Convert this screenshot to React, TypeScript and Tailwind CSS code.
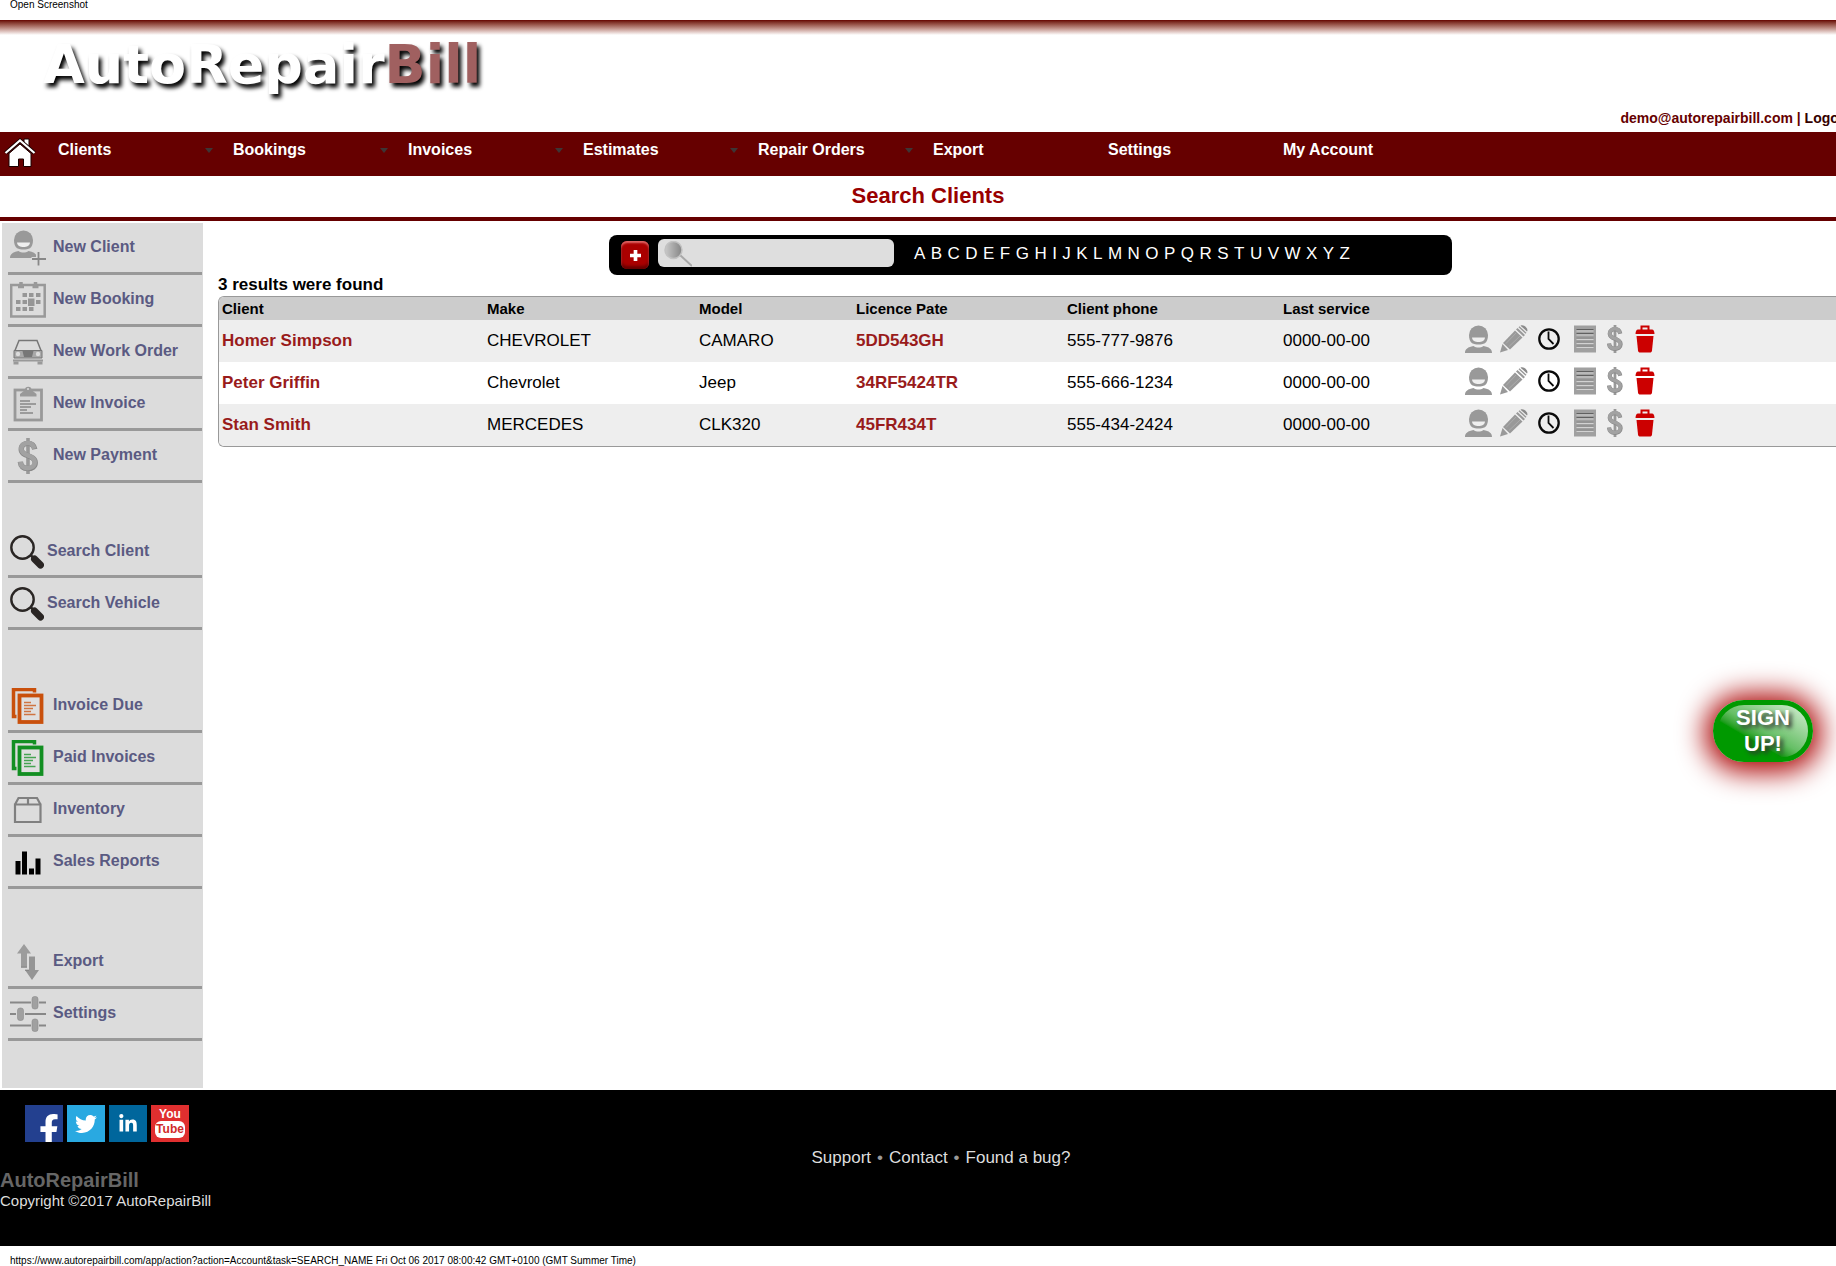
import React from "react";
import { FaFacebookF, FaLinkedinIn, FaTwitter } from "react-icons/fa";

type IconProps = { className?: string };

const GREY = "#999999";

function HomeIcon() {
  return (
    <svg viewBox="0 0 32 30" className="h-[30px] w-8" aria-hidden="true">
      <path d="M20 6V1h5v9z" fill="#fff" stroke="#1a0000" strokeWidth="1" />
      <path d="M5 15.500L16 6l11 9.500V28.500H19.500V21h-5v7.500H5z" fill="#fff" stroke="#1a0000" strokeWidth="1" />
      <path d="M1.500 15L16 2.500 30.500 15" fill="none" stroke="#1a0000" strokeWidth="4" />
      <path d="M1.500 15L16 2.500 30.500 15" fill="none" stroke="#fff" strokeWidth="2.200" />
    </svg>
  );
}

function PersonShape() {
  return (
    <g>
      <path d="M4 10a9.500 9.500 0 0 1 19 0c0 9-5 9.500-9.500 9.500S4 19 4 10z" fill={GREY} />
      <path d="M7 12.500h13c-.5 3.500-3 4.500-6.500 4.500S7.500 16 7 12.500z" fill="#efefef" />
      <path d="M0 28c0-4 3-6 8.500-7 3 2 7 2 10 0 5.500 1 8.500 3 8.500 7z" fill={GREY} />
    </g>
  );
}

function PersonIcon() {
  return (
    <svg viewBox="0 0 28 28" className="size-7" aria-hidden="true">
      <PersonShape />
    </svg>
  );
}

function PersonPlusIcon({ className }: IconProps) {
  return (
    <svg viewBox="0 0 36 36" className={className} aria-hidden="true">
      <PersonShape />
      <path d="M28 22.500v13M21.500 29h14" stroke="#dcdcdc" strokeWidth="4" />
      <path d="M28.500 22v13.500M22 29h14" stroke="#888" strokeWidth="1.800" />
    </svg>
  );
}

function CalendarIcon({ className }: IconProps) {
  return (
    <svg viewBox="0 0 36 36" className={className} aria-hidden="true">
      <rect x="1.200" y="3" width="33.500" height="31.500" fill="none" stroke="#999" strokeWidth="2.500" />
      <path d="M8 4.500h6M22.500 4.500h6" stroke="#999" strokeWidth="3.500" />
      <path d="M11 0v6M25.500 0v6" stroke="#999" strokeWidth="3.500" />
      <g fill="#969696">
        <path d="M12.500 11h4.500v4h-4.500zM19 11h4.500v4H19zM26 11h4.500v4H26z" />
        <path d="M6 18h4.500v4H6zM12.500 18h4.500v4h-4.500zM18 16.500h6.500V24H18zM26 18h4.500v4H26z" />
        <path d="M6 25h4.500v4H6zM12.500 25h4.500v4h-4.500zM19 25h4.500v4H19z" />
      </g>
    </svg>
  );
}

function CarIcon({ className }: IconProps) {
  return (
    <svg viewBox="0 0 36 36" className={className} aria-hidden="true">
      <path d="M5 16.500L9 6.500h18l4 10" fill="none" stroke="#777" strokeWidth="1.500" />
      <path d="M4 16.500h28V24H4z" fill="#a8a8a8" stroke="#777" strokeWidth="1" />
      <path d="M12.500 17h11l-1.500 6h-8z" fill="#777" />
      <circle cx="8" cy="20" r="2.200" fill="#dcdcdc" />
      <circle cx="28" cy="20" r="2.200" fill="#dcdcdc" />
      <path d="M3 26.500h30" stroke="#999" strokeWidth="2" />
      <path d="M3.500 27.500h5V30.500h-5zM27.500 27.500h5V30.500h-5z" fill="#999" />
    </svg>
  );
}

function ClipboardIcon({ className }: IconProps) {
  return (
    <svg viewBox="0 0 36 36" className={className} aria-hidden="true">
      <rect x="5" y="4" width="26.500" height="30" fill="#d6d6d6" stroke="#999" strokeWidth="2.800" />
      <path d="M10 10.500V8l5-4a3.200 3.200 0 0 1 6.500 0l5 4v2.500z" fill="#999" />
      <circle cx="18" cy="3" r="1" fill="#dcdcdc" />
      <path d="M10 15h10M10 18h16M10 21h11M10 24h7M10 27h13" stroke="#888" strokeWidth="1.500" />
    </svg>
  );
}

function DollarIcon({ className }: IconProps) {
  return (
    <svg viewBox="0 0 22 40" className={className} aria-hidden="true">
      <path d="M11 0v40" stroke="#999" strokeWidth="4" />
      <path
        d="M18.500 12.500C17.500 7.500 14.500 6 11 6c-4 0-7.500 2-7.500 6.500 0 9 15.500 5.500 15.500 15 0 4.500-4 6.500-8 6.500-4.500 0-8-2-8.500-7.500"
        fill="none"
        stroke="#888"
        strokeWidth="6"
      />
      <path
        d="M18 12C17 7.500 14.500 5.500 11 5.500c-4 0-7.500 2-7.500 6.500 0 9 15 5.500 15 15 0 4.500-4 6.500-8 6.500-4.500 0-7.500-2-8-7"
        fill="none"
        stroke="#a2a2a2"
        strokeWidth="5"
      />
    </svg>
  );
}

function MagnifierIcon({ className }: IconProps) {
  return (
    <svg viewBox="0 0 34 34" className={className} aria-hidden="true">
      <circle cx="12.500" cy="12.500" r="11.200" fill="none" stroke="#2a2624" strokeWidth="2.400" />
      <path d="M20.500 20l4 4" stroke="#2a2624" strokeWidth="2.500" />
      <path d="M24.500 24l6 6" stroke="#2a2624" strokeWidth="7" strokeLinecap="round" />
    </svg>
  );
}

function Documents({ className, color }: { className?: string; color: string }) {
  return (
    <svg viewBox="0 0 36 36" className={className} aria-hidden="true">
      <path d="M7.500 28.500H4.500V1.500H25.500V4.500" transform="translate(-1 0)" fill="none" stroke={color} strokeWidth="3.500" />
      <rect x="10.500" y="7.500" width="22" height="26.500" transform="translate(-1 0)" fill="#e0e0e0" stroke={color} strokeWidth="3.800" />
      <path d="M14 14.500h7M14 17.500h12M14 20.500h9M14 23.500h7M14 26.500h11.500" stroke={color} strokeOpacity="0.750" strokeWidth="1.400" />
    </svg>
  );
}

function OrangeDocsIcon({ className }: IconProps) {
  return <Documents className={className} color="#c9500c" />;
}

function GreenDocsIcon({ className }: IconProps) {
  return <Documents className={className} color="#128f22" />;
}

function BoxIcon({ className }: IconProps) {
  return (
    <svg viewBox="0 0 36 36" className={className} aria-hidden="true">
      <path d="M5 12.500h25.500V30H5zM5 12.500L8.500 6h18.500l3.500 6.500M18 6v6.500" fill="none" stroke="#808080" strokeWidth="2.200" />
    </svg>
  );
}

function BarsIcon({ className }: IconProps) {
  return (
    <svg viewBox="0 0 36 36" className={className} aria-hidden="true">
      <path d="M5.500 17h5V30.500h-5zM12 7.500h5v23h-5zM19 24.500h5v6h-5zM25.500 14.500h5v16h-5z" fill="#000" />
    </svg>
  );
}

function UpDownIcon({ className }: IconProps) {
  return (
    <svg viewBox="0 0 36 36" className={className} aria-hidden="true">
      <path d="M14 0l7 9.500h-4V23h-6V9.500H7z" fill="#9c9c9c" />
      <path d="M19 12.500h6V26h4l-7 10-7-10h4z" fill="#959595" />
      <path d="M11 23.200h6M15 26.200h4" stroke="#7f7f7f" />
    </svg>
  );
}

function SlidersIcon({ className }: IconProps) {
  return (
    <svg viewBox="0 0 36 36" className={className} aria-hidden="true">
      <path d="M0 6.500h21M29 6.500h7M0 18h6M15 18h21M0 29.500h21M29 29.500h7" stroke="#888" strokeWidth="1.800" />
      <g fill="#a0a0a0" stroke="#8c8c8c" strokeWidth="0.600">
        <rect x="22" y="0.500" width="6" height="12.500" rx="2.500" />
        <rect x="7.500" y="12" width="6" height="12.500" rx="2.500" />
        <rect x="22" y="23" width="6" height="12.500" rx="2.500" />
      </g>
    </svg>
  );
}

function PencilIcon() {
  return (
    <svg viewBox="0 0 28 28" className="size-7" aria-hidden="true">
      <path d="M0 27.500l2.500-8.500L8 25z" fill={GREY} />
      <path d="M3 18L15 5.500l7.500 7L10 24.500z" fill={GREY} />
      <path d="M16 4.500l1.500-1.500 7.500 7-1.500 1.500zM18.500 2.200l1-1 7 6.500-1 1z" fill={GREY} />
      <path d="M20.500 .8c3-2 8.500 3 6.500 5.700z" fill="#8a8a8a" />
      <path d="M6 18.500l10-10.500M9 21.500L20 11" stroke="#acacac" />
    </svg>
  );
}

function ClockIcon() {
  return (
    <svg viewBox="0 0 22 22" className="size-[22px]" aria-hidden="true">
      <circle cx="11" cy="11" r="9.700" fill="none" stroke="#0a0a0a" strokeWidth="2.300" />
      <path d="M10.500 3.500V11l5 5" fill="none" stroke="#0a0a0a" strokeWidth="1.800" />
    </svg>
  );
}

function ListIcon() {
  return (
    <svg viewBox="0 0 22 28" className="h-7 w-[22px]" aria-hidden="true">
      <path d="M0 .5h22v27H0z" fill="#a0a0a0" />
      <path d="M2.500 4.500h17M2.500 8.500h17" stroke="#606060" strokeWidth="1.200" />
      <path d="M2.500 6h17M2.500 10h17M2.500 14.500h17M2.500 18.500h17M2.500 22.500h17" stroke="#d2d2d2" strokeWidth="1.200" />
      <path d="M2.500 13h17M2.500 17h17M2.500 21h17" stroke="#888" strokeWidth="1" />
    </svg>
  );
}

function TrashIcon() {
  return (
    <svg viewBox="0 0 20 28" className="h-7 w-5" aria-hidden="true">
      <path d="M6.500 5V1.500h7V5" fill="none" stroke="#cc0000" strokeWidth="2" />
      <path d="M3 4.500h14c1.500 0 2.500 2 2.500 4.500H.5C.5 6.500 1.500 4.500 3 4.500z" fill="#cc0000" />
      <path d="M1.500 11h17L17 25.500c-.2 1.500-1 2-2 2H5c-1 0-1.800-.5-2-2z" fill="#cc0000" />
    </svg>
  );
}

const navItems = [
  { label: "Clients", menu: true },
  { label: "Bookings", menu: true },
  { label: "Invoices", menu: true },
  { label: "Estimates", menu: true },
  { label: "Repair Orders", menu: true },
  { label: "Export", menu: false },
  { label: "Settings", menu: false },
  { label: "My Account", menu: false },
];

const newLinks = [
  { label: "New Client", Icon: PersonPlusIcon },
  { label: "New Booking", Icon: CalendarIcon },
  { label: "New Work Order", Icon: CarIcon },
  { label: "New Invoice", Icon: ClipboardIcon },
  { label: "New Payment", Icon: DollarIcon },
];

const searchLinks = [
  { label: "Search Client", Icon: MagnifierIcon },
  { label: "Search Vehicle", Icon: MagnifierIcon },
];

const reportLinks = [
  { label: "Invoice Due", Icon: OrangeDocsIcon },
  { label: "Paid Invoices", Icon: GreenDocsIcon },
  { label: "Inventory", Icon: BoxIcon },
  { label: "Sales Reports", Icon: BarsIcon },
];

const toolLinks = [
  { label: "Export", Icon: UpDownIcon },
  { label: "Settings", Icon: SlidersIcon },
];

const clients = [
  { name: "Homer Simpson", make: "CHEVROLET", model: "CAMARO", plate: "5DD543GH", phone: "555-777-9876", last: "0000-00-00" },
  { name: "Peter Griffin", make: "Chevrolet", model: "Jeep", plate: "34RF5424TR", phone: "555-666-1234", last: "0000-00-00" },
  { name: "Stan Smith", make: "MERCEDES", model: "CLK320", plate: "45FR434T", phone: "555-434-2424", last: "0000-00-00" },
];

type SideLink = { label: string; Icon: React.ComponentType<IconProps> };

function SideGroup({ links, compact }: { links: SideLink[]; compact?: boolean }) {
  return (
    <ul>
      {links.map(({ label, Icon }) => (
        <li key={label} className="h-[52px] border-b-[3px] border-[#999999]">
          <a href="#" className={compact ? "flex h-full items-center gap-[3px] pt-0.5 pl-0.5" : "flex h-full items-center gap-[7px] pl-0.5"}>
            <Icon className={compact ? "size-[34px] shrink-0" : "h-9 w-9 shrink-0"} />
            <span className="pb-0.5 text-base leading-5 font-bold whitespace-nowrap text-[#5a5a82]">{label}</span>
          </a>
        </li>
      ))}
    </ul>
  );
}

function Header() {
  return (
    <header>
      <div className="h-[15px] bg-linear-to-b from-[#660000] to-white" />
      <div className="flex h-[97px] items-start justify-between">
        <h1 className="pl-[43px] font-['DejaVu_Sans',sans-serif] text-[54px] leading-[60px] font-bold whitespace-nowrap text-white [text-shadow:3px_4px_4px_#000]">
          AutoRepair<span className="text-[#a06060]">Bill</span>
        </h1>
        <p className="self-end pr-1 pb-1 text-sm leading-5 font-bold whitespace-nowrap text-[#660000]">
          demo@autorepairbill.com | <a href="#" className="text-[#330000]">Logout</a>
        </p>
      </div>
      <nav className="flex h-11 items-start bg-[#660000]">
        <a href="#" aria-label="Home" className="w-[58px] pt-1.5 pl-1">
          <HomeIcon />
        </a>
        {navItems.map((item) => (
          <a key={item.label} href="#" className="flex w-[175px] items-center justify-between pt-2 pr-5 text-base leading-5 font-bold text-white">
            {item.label}
            {item.menu && <span className="border-x-4 border-t-[5px] border-x-transparent border-t-[#3d3535]" />}
          </a>
        ))}
      </nav>
      <h2 className="h-[45px] border-b-4 border-[#660000] pt-1.5 text-center text-[22px] leading-7 font-bold text-[#990000]">Search Clients</h2>
    </header>
  );
}

function Sidebar() {
  return (
    <aside className="ml-0.5 w-[201px] shrink-0 bg-[#dcdcdc] pr-px pb-[47px] pl-1.5">
      <SideGroup links={newLinks} />
      <div className="h-[43px]" />
      <SideGroup links={searchLinks} compact />
      <div className="h-[51px]" />
      <SideGroup links={reportLinks} />
      <div className="h-12" />
      <SideGroup links={toolLinks} />
    </aside>
  );
}

function SearchBar() {
  return (
    <form className="mx-auto flex h-10 w-[843px] items-center rounded-lg bg-black pl-3">
      <button
        type="button"
        aria-label="Add client"
        className="flex size-7 items-center justify-center rounded-md bg-[#aa0000] shadow-[inset_0_2px_2px_#d66,inset_0_-3px_3px_#600]"
      >
        <svg viewBox="0 0 12 12" className="size-[11px]" aria-hidden="true">
          <path d="M6 0v12M0 6h12" stroke="#fff" strokeWidth="4" />
        </svg>
      </button>
      <label className="relative mb-1 ml-[9px] block">
        <input type="text" aria-label="Search clients" className="block h-7 w-[236px] rounded-md bg-[#dedede] pl-10 text-base outline-none" />
        <svg viewBox="0 0 28 26" className="absolute top-0.5 left-1.5 h-[26px] w-7" aria-hidden="true">
          <defs>
            <linearGradient id="lens">
              <stop offset="0" stopColor="#c9c9c9" />
              <stop offset="1" stopColor="#858585" />
            </linearGradient>
          </defs>
          <circle cx="9.500" cy="9" r="8.500" fill="url(#lens)" stroke="#c2c2c2" strokeWidth="1.500" />
          <path d="M16.500 14.500L28 25" stroke="#a8a8a8" strokeWidth="2" />
        </svg>
      </label>
      <div className="mb-0.5 ml-5 flex w-[436px] justify-between text-[17px] leading-6 text-white">
        {"ABCDEFGHIJKLMNOPQRSTUVWXYZ".split("").map((letter) => (
          <a key={letter} href="#">
            {letter}
          </a>
        ))}
      </div>
    </form>
  );
}

function RowActions() {
  return (
    <div className="flex items-center pb-1">
      <button type="button" aria-label="View client" className="w-[35px]"><PersonIcon /></button>
      <button type="button" aria-label="Edit client" className="w-[38px]"><PencilIcon /></button>
      <button type="button" aria-label="History" className="w-9"><ClockIcon /></button>
      <button type="button" aria-label="Invoices" className="w-[33px]"><ListIcon /></button>
      <button type="button" aria-label="Payments" className="w-7"><DollarIcon className="h-7 w-4" /></button>
      <button type="button" aria-label="Delete client"><TrashIcon /></button>
    </div>
  );
}

function ClientTable() {
  return (
    <div className="overflow-hidden rounded-l-md border border-r-0 border-[#999999]">
      <table className="w-full table-fixed text-left text-[17px] leading-6">
        <thead>
          <tr className="h-[23px] bg-[#cccccc] text-[15px] leading-5">
            <th scope="col" className="w-[265px] pl-[3px]">Client</th>
            <th scope="col" className="w-[212px] pl-[3px]">Make</th>
            <th scope="col" className="w-[157px] pl-[3px]">Model</th>
            <th scope="col" className="w-[211px] pl-[3px]">Licence Pate</th>
            <th scope="col" className="w-[216px] pl-[3px]">Client phone</th>
            <th scope="col" className="w-[182px] pl-[3px]">Last service</th>
            <td />
          </tr>
        </thead>
        <tbody>
          {clients.map((client) => (
            <tr key={client.name} className="h-[42px] odd:bg-[#eeeeee] even:bg-white">
              <td className="pl-[3px]"><a href="#" className="font-bold text-[#991b1b]">{client.name}</a></td>
              <td className="pl-[3px]">{client.make}</td>
              <td className="pl-[3px]">{client.model}</td>
              <td className="pl-[3px]"><a href="#" className="font-bold text-[#991b1b]">{client.plate}</a></td>
              <td className="pl-[3px]">{client.phone}</td>
              <td className="pl-[3px]">{client.last}</td>
              <td className="pl-[3px]"><RowActions /></td>
            </tr>
          ))}
        </tbody>
      </table>
    </div>
  );
}

function Footer() {
  return (
    <footer className="mt-0.5 grid h-[156px] grid-cols-[1fr_auto_1fr] bg-black">
      <div className="pt-[15px]">
        <div className="flex gap-1 pl-[25px]">
          <a href="#" aria-label="Facebook" className="flex h-[37px] w-[38px] items-end justify-end overflow-hidden bg-[#23408f] pr-1">
            <FaFacebookF className="-mb-1 h-8 w-5 text-white" />
          </a>
          <a href="#" aria-label="Twitter" className="flex h-[37px] w-[38px] items-center justify-center bg-[#29a9e1]">
            <FaTwitter className="size-[22px] text-white" />
          </a>
          <a href="#" aria-label="LinkedIn" className="flex h-[37px] w-[38px] items-center justify-center bg-[#00669c]">
            <FaLinkedinIn className="size-5 text-white" />
          </a>
          <a href="#" className="flex h-[37px] w-[38px] flex-col items-center bg-[#e02f2f] pt-0.5 text-[12px] leading-[14px] font-bold text-white">
            You
            <span className="rounded-md bg-white px-px leading-[17px] text-[#d02a2a]">Tube</span>
          </a>
        </div>
        <p className="pt-[26px] text-xl leading-6 font-bold text-[#666666]">AutoRepairBill</p>
        <p className="text-[15px] leading-[18px] text-[#dddddd]">Copyright ©2017 AutoRepairBill</p>
      </div>
      <div className="flex items-start gap-1.5 pt-14 pl-[26px] text-[17px] leading-6 text-[#dddddd]">
        <a href="#">Support</a>
        <span className="text-[#999999]">•</span>
        <a href="#">Contact</a>
        <span className="text-[#999999]">•</span>
        <a href="#">Found a bug?</a>
      </div>
    </footer>
  );
}

export default function App() {
  return (
    <div className="relative overflow-hidden bg-white font-['Liberation_Sans',Arial,sans-serif] text-black">
      <a href="#" className="block h-5 pl-2.5 text-[10px] leading-[10px]">Open Screenshot</a>
      <div className="w-[calc(100%+20px)]">
        <Header />
        <div className="flex pt-0.5">
          <Sidebar />
          <main className="min-w-0 flex-1 pt-3">
            <div className="pl-0.5">
              <SearchBar />
            </div>
            <div className="pl-[15px]">
              <p className="h-[21px] text-[17px] leading-5 font-bold">3 results were found</p>
              <ClientTable />
            </div>
          </main>
        </div>
        <Footer />
      </div>
      <p className="h-5 pt-2.5 pl-2.5 text-[10px] leading-[10px]">
        https://www.autorepairbill.com/app/action?action=Account&amp;task=SEARCH_NAME Fri Oct 06 2017 08:00:42 GMT+0100 (GMT Summer Time)
      </p>
      <button
        type="button"
        className="absolute top-[700px] right-[23px] h-[62px] w-[100px] rounded-[31px] border-[5px] border-[#009900] bg-linear-to-bl from-[#d8efd8] via-[#66bf66] via-50% to-[#009900] to-65% text-[22px] leading-[26px] font-bold text-white shadow-[0_2px_28px_8px_#aa0000] [text-shadow:3px_3px_4px_#333]"
      >
        SIGN UP!
      </button>
    </div>
  );
}
